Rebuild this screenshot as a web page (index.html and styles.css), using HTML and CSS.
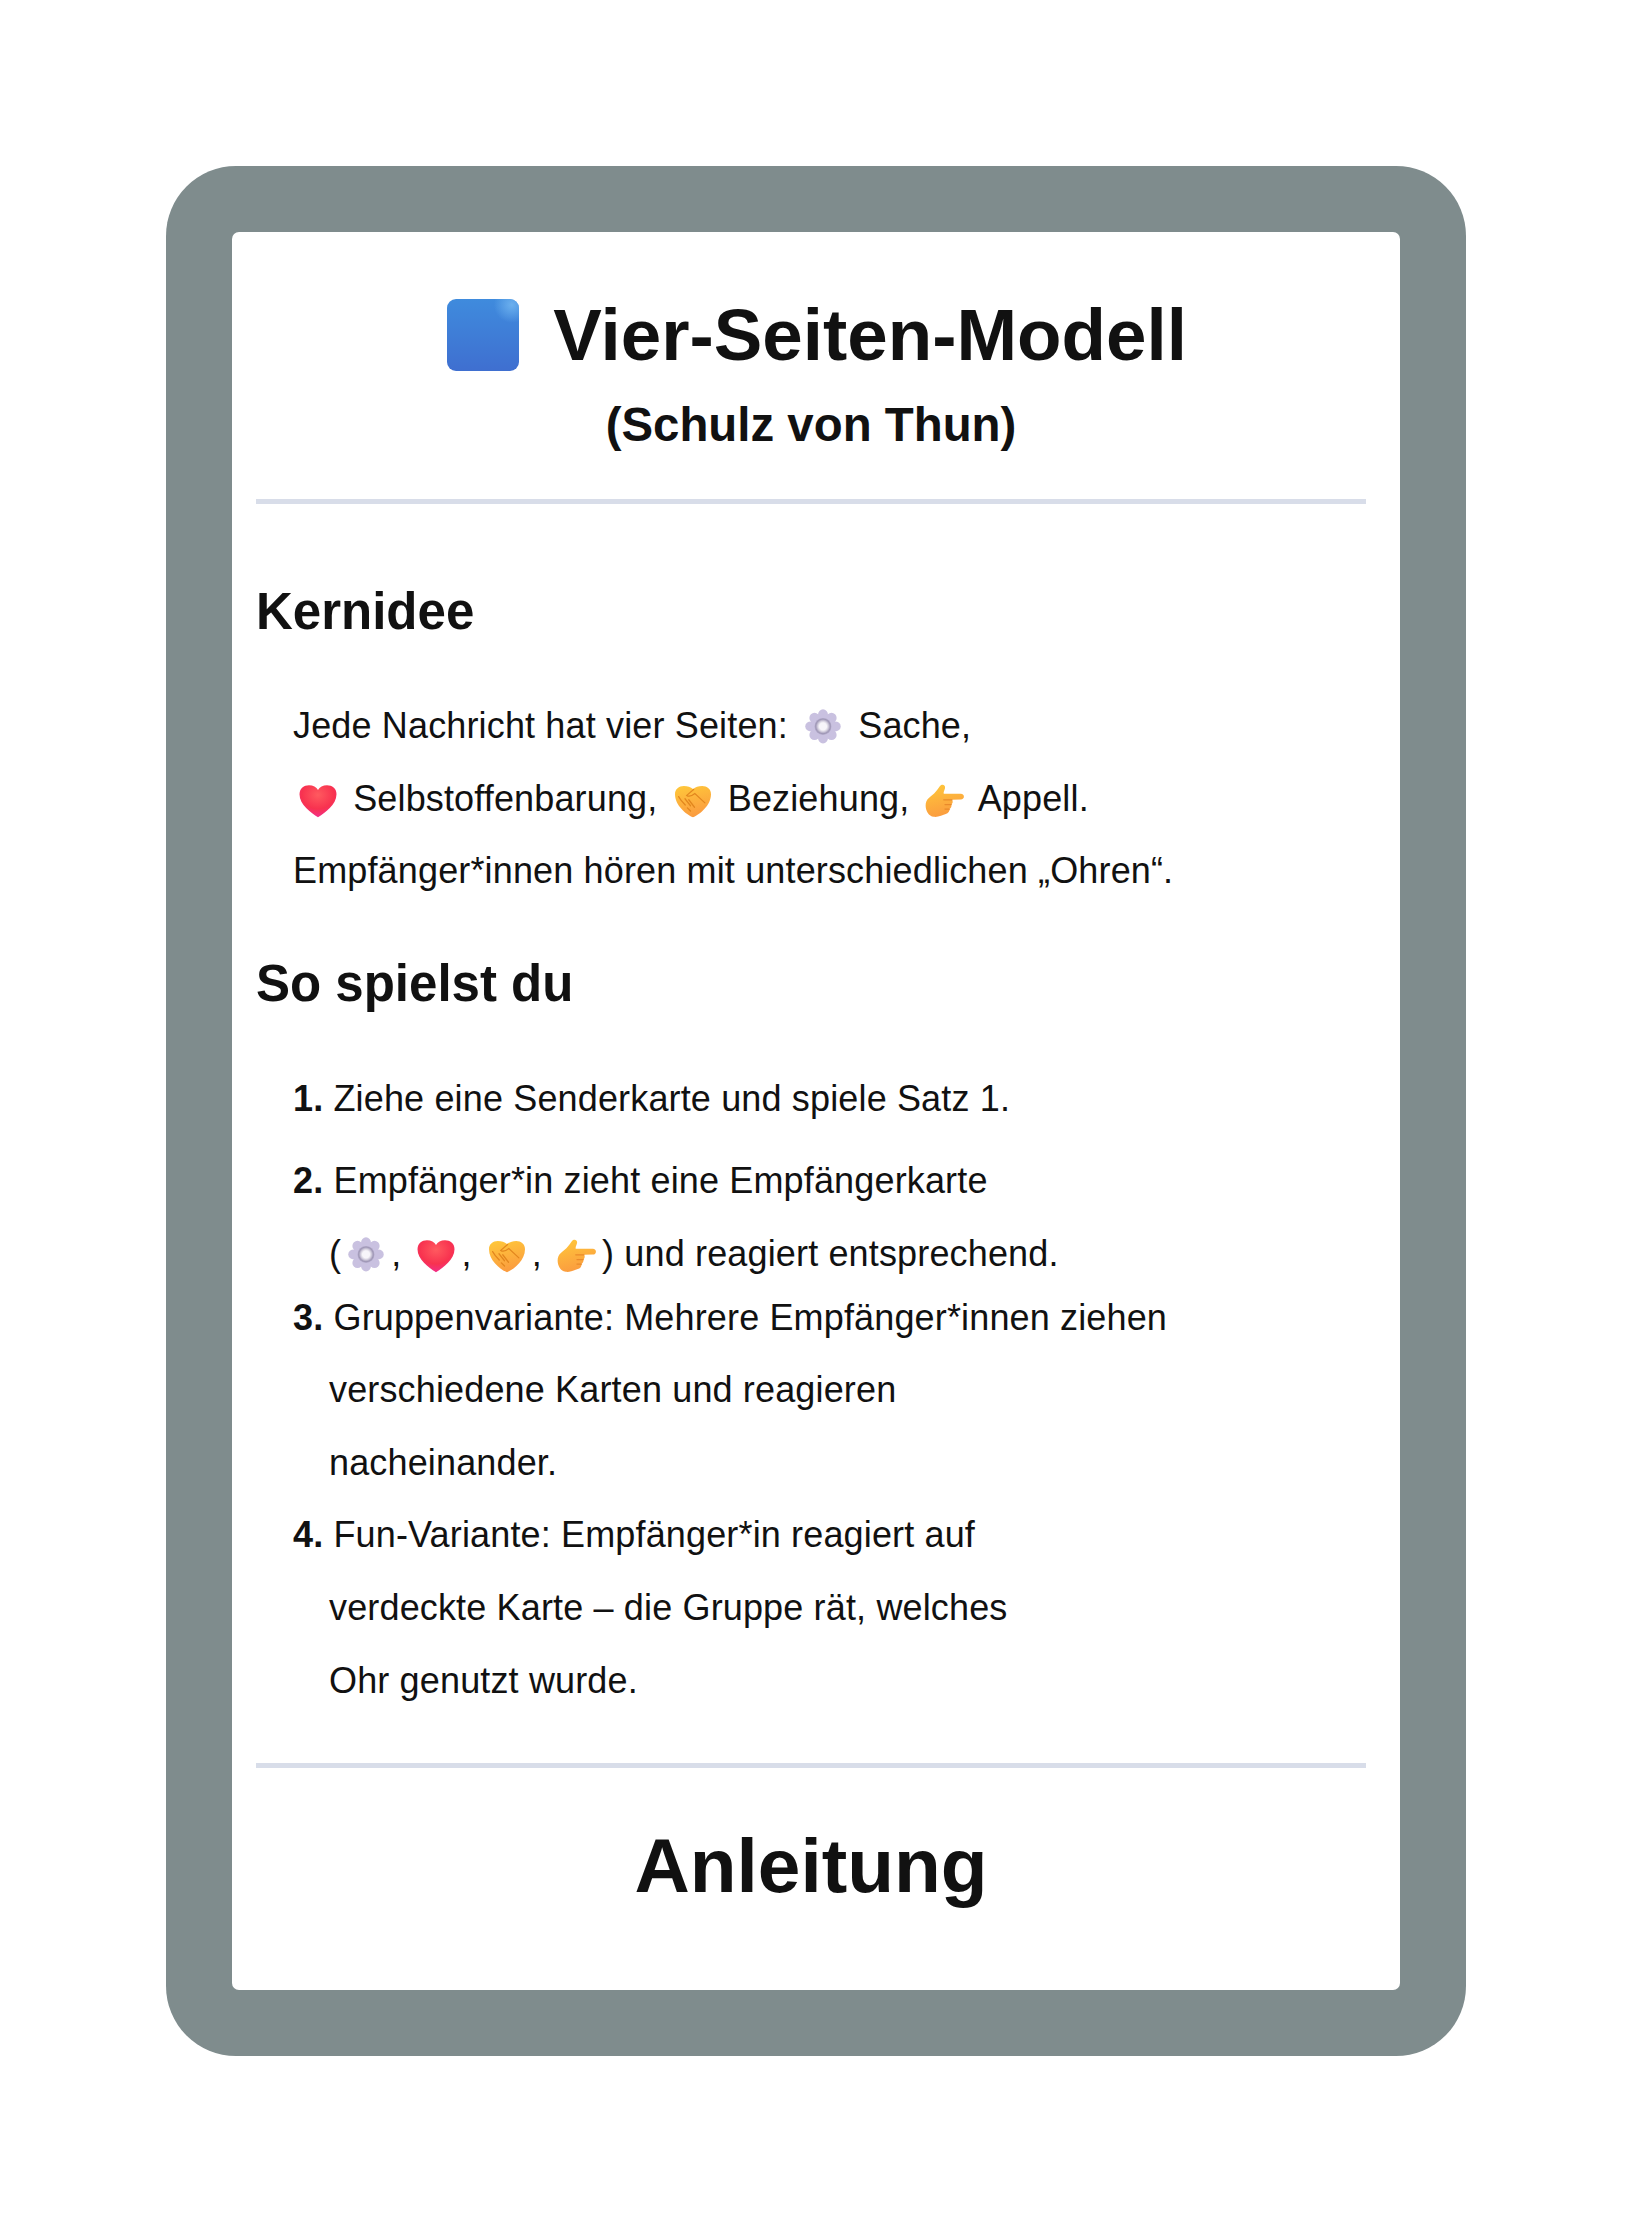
FILE: index.html
```html
<!doctype html>
<html lang="de">
	<head>
		<title>Vier-Seiten-Modell</title>
		<link rel="stylesheet" href="styles.css">
	</head>

	<body>
		<svg class="icon-defs" aria-hidden="true">
			<defs>
				<linearGradient id="blueFill" x1="0" y1="0" x2="0" y2="1">
					<stop offset="0" stop-color="#3f8bdd" />
					<stop offset="1" stop-color="#3f6fd0" />
				</linearGradient>
				<radialGradient id="blueGlow" cx="0.9" cy="0.08" r="0.25">
					<stop offset="0" stop-color="#6cb0ee" />
					<stop offset="1" stop-color="#6cb0ee" stop-opacity="0" />
				</radialGradient>
				<radialGradient id="heartFill" cx="0.5" cy="0.3" r="0.8">
					<stop offset="0" stop-color="#ff5a5f" />
					<stop offset="0.55" stop-color="#f8324f" />
					<stop offset="1" stop-color="#f02ca0" />
				</radialGradient>
				<linearGradient id="handFill" x1="0" y1="0" x2="0.3" y2="1">
					<stop offset="0" stop-color="#ffc93a" />
					<stop offset="1" stop-color="#fb9d3f" />
				</linearGradient>
				<radialGradient id="gearHole" cx="0.5" cy="0.5" r="0.5">
					<stop offset="0.42" stop-color="#f7f5fa" />
					<stop offset="0.62" stop-color="#d5d0df" />
					<stop offset="0.85" stop-color="#9f97b6" />
					<stop offset="1" stop-color="#b5adcc" />
				</radialGradient>

				<symbol id="gear" viewBox="0 0 32 32">
					<g fill="#c9c1e0">
						<ellipse cx="16" cy="5.6" rx="4" ry="4.6" />
						<ellipse cx="16" cy="23.8" rx="4" ry="4.6" />
						<ellipse cx="6.4" cy="14.7" rx="4.6" ry="4" />
						<ellipse cx="25.6" cy="14.7" rx="4.6" ry="4" />
						<circle cx="9.2" cy="7.9" r="4.1" />
						<circle cx="22.8" cy="7.9" r="4.1" />
						<circle cx="9.2" cy="21.5" r="4.1" />
						<circle cx="22.8" cy="21.5" r="4.1" />
						<circle cx="16" cy="14.7" r="10" />
					</g>
					<circle cx="16" cy="14.7" r="6.8" fill="url(#gearHole)" />
				</symbol>

				<symbol id="heart" viewBox="0 0 32 32">
					<path
						fill="url(#heartFill)"
						d="M16 29C10.5 25 1.2 19 1.2 10.5 1.2 6 4.8 3.4 8.8 3.4 12 3.4 14.8 5 16 7.2 17.2 5 20 3.4 23.2 3.4 27.2 3.4 30.8 6 30.8 10.5 30.8 19 21.5 25 16 29Z"
					/>
				</symbol>

				<symbol id="handshake" viewBox="0 0 32 32">
					<path
						fill="url(#handFill)"
						d="M16 29C10.5 26.5 1.6 19.5 1.6 10.5 1.6 6.5 4.8 4 8.6 4 11.8 4 14 5 16 6.4 18 5 20.2 4 23.4 4 27.2 4 30.4 6.5 30.4 10.5 30.4 19.5 21.5 26.5 16 29Z"
					/>
					<path
						fill="none"
						stroke="#e2861e"
						stroke-width="1"
						stroke-linecap="round"
						d="M16.5 6.8 11 11.5C13 13 15 12 17.5 10L25.5 17.5M6.5 15.5 9.8 19.2M9.6 14.2 14 19.8M12.6 15 17.2 21M4.5 12.5 6.5 15.5M14 24 11.5 21.5"
					/>
				</symbol>

				<symbol id="pointer" viewBox="0 0 32 32">
					<path
						fill="url(#handFill)"
						d="M.5 19.5C.5 14 4.5 12.6 7.5 9.7 9.5 7.7 10.6 6 12 4 13.6 2 16.6 3 16 5.8 15.6 7.6 14.6 8.8 15 10.2L28.6 10.2C32 10.2 32 14.8 28.6 14.8L21.6 15C22.6 16.2 22.2 18.2 21 18.7 21.6 20.2 20.6 22 19.6 22.2 19.9 24 18.6 26 16.6 26.4 14.5 27.2 10 29.2 7 28.6 3 28 .5 24 .5 19.5Z"
					/>
					<path
						fill="none"
						stroke="#e98a2b"
						stroke-width="1"
						stroke-linecap="round"
						d="M15 15H21.6M16 18.8H21M16 22.4H19.6"
					/>
				</symbol>
			</defs>
		</svg>

		<main class="frame">
			<div class="card">
				<header class="card-head">
					<h1 class="title">
						<svg class="title-square" viewBox="0 0 72 72" role="img" aria-label="Blaues Quadrat">
							<rect width="72" height="72" rx="9" fill="url(#blueFill)" />
							<rect width="72" height="72" rx="9" fill="url(#blueGlow)" />
						</svg>
						Vier-Seiten-Modell
					</h1>
					<p class="subtitle">(Schulz von Thun)</p>
				</header>

				<section class="intro">
					<h2>Kernidee</h2>
					<p>
						Jede Nachricht hat vier Seiten:
						<svg class="emoji"><use href="#gear" /></svg>
						Sache,<br />
						<svg class="emoji"><use href="#heart" /></svg>
						Selbstoffenbarung,
						<svg class="emoji"><use href="#handshake" /></svg>
						Beziehung,
						<svg class="emoji"><use href="#pointer" /></svg>
						Appell.<br />
						Empfänger*innen hören mit unterschiedlichen „Ohren“.
					</p>
				</section>

				<section class="steps">
					<h2>So spielst du</h2>
					<ol class="step-list">
						<li class="step-first"><b>1.</b> Ziehe eine Senderkarte und spiele Satz 1.</li>
						<li class="step-second">
							<b>2.</b> Empfänger*in zieht eine Empfängerkarte<br />
							<span class="emoji-row">
								(<svg class="emoji"><use href="#gear" /></svg>,
								<svg class="emoji"><use href="#heart" /></svg>,
								<svg class="emoji"><use href="#handshake" /></svg>,
								<svg class="emoji"><use href="#pointer" /></svg>) und reagiert entsprechend.
							</span>
						</li>
						<li>
							<b>3.</b> Gruppenvariante: Mehrere Empfänger*innen ziehen<br />
							<span class="indent">verschiedene Karten und reagieren</span><br />
							<span class="indent">nacheinander.</span>
						</li>
						<li>
							<b>4.</b> Fun-Variante: Empfänger*in reagiert auf<br />
							<span class="indent">verdeckte Karte – die Gruppe rät, welches</span><br />
							<span class="indent">Ohr genutzt wurde.</span>
						</li>
					</ol>
				</section>

				<footer class="card-foot">Anleitung</footer>
			</div>
		</main>
	</body>
</html>
```

FILE: styles.css
```css
:root {
	--frame: #7f8c8d;
	--rule: #d8dde9;
	--ink: #111;
}

body {
	margin: 0;
	background-color: #fff;
	color: var(--ink);
	font-family: "Liberation Sans", Arial, sans-serif;
}

.icon-defs {
	position: absolute;
	width: 0;
	height: 0;
}

.frame {
	box-sizing: border-box;
	width: 1300px;
	height: 1890px;
	margin: 166px 0 0 166px;
	padding: 66px;
	background-color: var(--frame);
	border-radius: 70px;
}

.card {
	box-sizing: border-box;
	height: 100%;
	padding: 0 34px 0 24px;
	background-color: #fff;
	border-radius: 7px;
}

.card-head {
	height: 267px;
	border-bottom: 5px solid var(--rule);
	text-align: center;
}

.title {
	margin: 0;
	padding: 67px 0 0 12px;
	font-size: 72.8px;
	line-height: 72px;
	font-weight: 700;
}

.title-square {
	width: 72px;
	height: 72px;
	margin-right: 14px;
	vertical-align: -11px;
}

.subtitle {
	margin: 0;
	padding-top: 26px;
	font-size: 47.4px;
	line-height: 56px;
	font-weight: 700;
}

h2 {
	margin: 0;
	font-size: 51px;
	line-height: 60px;
	font-weight: 700;
}

.intro {
	padding-top: 78px;
}

.intro p {
	margin: 48px 0 0;
	padding-left: 37px;
	font-size: 36px;
	line-height: 72.6px;
	letter-spacing: 0.15px;
}

.steps {
	padding-top: 46px;
}

.step-list {
	list-style: none;
	margin: 49px 0 0;
	padding: 0 0 0 37px;
	font-size: 36px;
	line-height: 72.6px;
	letter-spacing: 0.15px;
}

.step-first {
	margin-bottom: 10px;
}

.step-second {
	margin-bottom: -9px;
}

.indent,
.emoji-row {
	display: inline-block;
	padding-left: 36px;
}

.emoji {
	width: 40px;
	height: 40px;
	margin: 0 5px;
	vertical-align: -10px;
}

.card-foot {
	margin-top: 46px;
	padding-top: 56px;
	border-top: 5px solid var(--rule);
	text-align: center;
	font-size: 76.6px;
	line-height: 84px;
	font-weight: 700;
}
```
